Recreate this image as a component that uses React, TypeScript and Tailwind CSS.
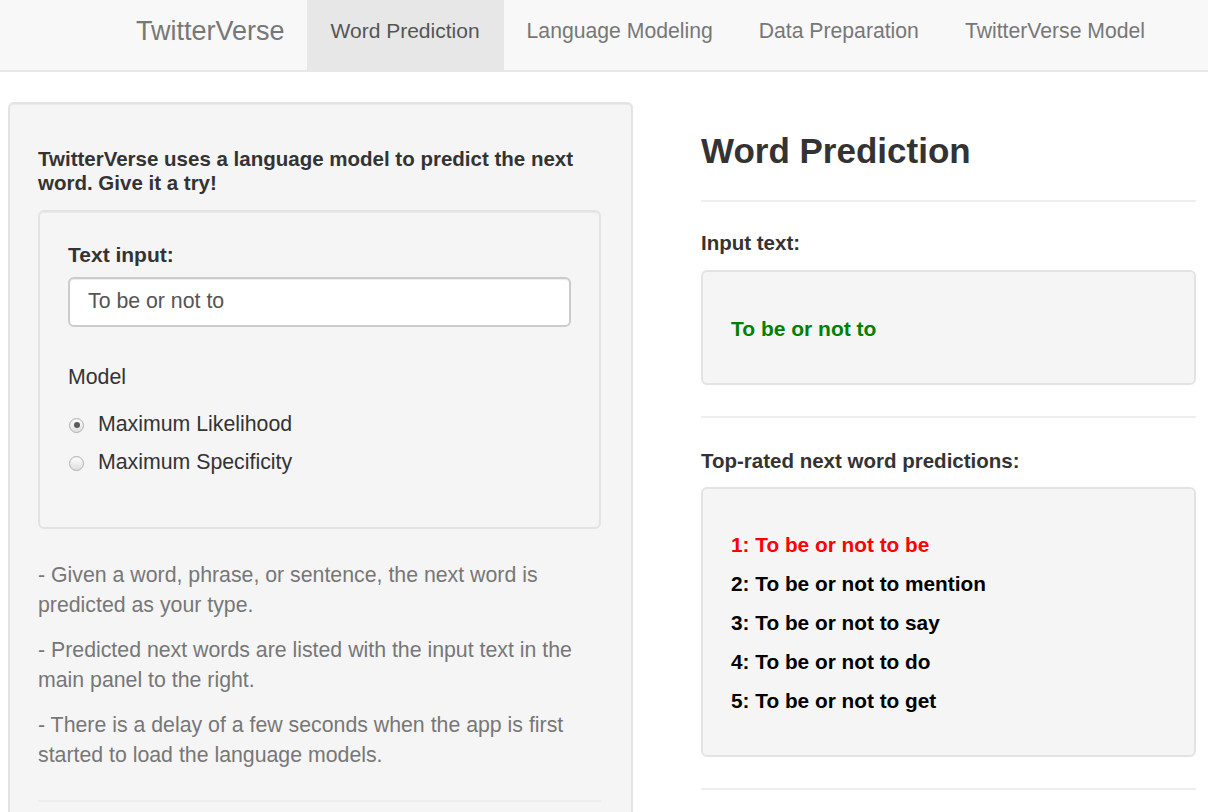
import React from "react";

const font = { fontFamily: '"Liberation Sans", Arial, Helvetica, sans-serif' };

function Radio({ checked, label }: { checked?: boolean; label: string }) {
  return (
    <div className="flex items-center h-[30px]">
      <div className="ml-[1px] w-[15px] h-[15px] rounded-full border border-[#b0b0b0] bg-gradient-to-b from-[#ffffff] to-[#dedede] flex items-center justify-center shadow-[inset_0_1px_1px_rgba(0,0,0,0.05)]">
        {checked && <div className="w-[6px] h-[6px] rounded-full bg-[#5a5a5a]" />}
      </div>
      <span className="ml-[14px] text-[21.3px] text-[#333]">{label}</span>
    </div>
  );
}

export default function App() {
  const tabs = ["Language Modeling", "Data Preparation", "TwitterVerse Model"];
  const preds = [
    "1: To be or not to be",
    "2: To be or not to mention",
    "3: To be or not to say",
    "4: To be or not to do",
    "5: To be or not to get",
  ];
  return (
    <div style={font} className="w-[1208px] h-[812px] overflow-hidden bg-white text-[#333]">
      <nav className="h-[72px] bg-[#f8f8f8] border-b-2 border-[#e7e7e7] flex pl-[114px]">
        <div className="h-full flex items-center pb-[8px] px-[22px] text-[27px] text-[#777]">TwitterVerse</div>
        <div className="h-full flex items-center pb-[8px] px-[24px] text-[21px] text-[#555] bg-[#e7e7e7]">Word Prediction</div>
        {tabs.map((t) => (
          <div key={t} className="h-full flex items-center pb-[8px] px-[23px] text-[21.2px] text-[#777]">
            {t}
          </div>
        ))}
      </nav>
      <div className="flex pl-[8px]">
        <div className="mt-[30px] w-[625px] shrink-0 bg-[#f5f5f5] border-2 border-[#e3e3e3] rounded-[6px] shadow-[inset_0_1px_1px_rgba(0,0,0,0.05)] pl-[28px] pr-[30px] pt-[43px] pb-[60px]">
          <div className="text-[20.5px] font-bold leading-[24px] text-[#333]">
            TwitterVerse uses a language model to predict the next word. Give it a try!
          </div>
          <div className="mt-[15px] bg-[#f5f5f5] border-2 border-[#e3e3e3] rounded-[6px] shadow-[inset_0_1px_1px_rgba(0,0,0,0.05)] pl-[28px] pr-[28px] pt-[28px] pb-[49px]">
            <div className="text-[21px] font-bold leading-[30px]">Text input:</div>
            <div className="mt-[7px] h-[50px] bg-white border-2 border-[#cccccc] rounded-[6px] shadow-[inset_0_1px_1px_rgba(0,0,0,0.075)] flex items-center pl-[18px] text-[21.3px] text-[#555]">
              To be or not to
            </div>
            <div className="mt-[35px] text-[21.3px] leading-[30px] text-[#333]">Model</div>
            <div className="mt-[18px] flex flex-col gap-[8px]">
              <Radio checked label="Maximum Likelihood" />
              <Radio label="Maximum Specificity" />
            </div>
          </div>
          <div className="mt-[31px] text-[21.3px] leading-[30px] text-[#777]">
            <p className="mb-[15px]">- Given a word, phrase, or sentence, the next word is predicted as your type.</p>
            <p className="mb-[15px]">- Predicted next words are listed with the input text in the main panel to the right.</p>
            <p>- There is a delay of a few seconds when the app is first started to load the language models.</p>
          </div>
          <div className="mt-[30px] border-t-2 border-[#eeeeee]" />
        </div>
        <div className="ml-[68px] w-[495px] shrink-0 pt-[59px]">
          <div className="h-[40px] leading-[40px] text-[35px] font-bold text-[#333]">Word Prediction</div>
          <div className="mt-[29px] border-t-2 border-[#eeeeee]" />
          <div className="mt-[26px] text-[20.5px] font-bold leading-[30px] text-[#333]">Input text:</div>
          <div className="mt-[12px] h-[115px] bg-[#f5f5f5] border-2 border-[#e3e3e3] rounded-[6px] pl-[28px] pt-[42px]">
            <div className="text-[21px] font-bold leading-[30px] text-[#008000]">To be or not to</div>
          </div>
          <div className="mt-[31px] border-t-2 border-[#eeeeee]" />
          <div className="mt-[28px] text-[20.5px] font-bold leading-[30px] text-[#333]">Top-rated next word predictions:</div>
          <div className="mt-[11px] h-[270px] bg-[#f5f5f5] border-2 border-[#e3e3e3] rounded-[6px] pl-[28px] pt-[36px]">
            {preds.map((p, i) => (
              <div key={p} className={`text-[20.8px] font-bold leading-[39px] ${i === 0 ? "text-[#ff0000]" : "text-black"}`}>
                {p}
              </div>
            ))}
          </div>
          <div className="mt-[31px] border-t-2 border-[#eeeeee]" />
        </div>
      </div>
    </div>
  );
}
